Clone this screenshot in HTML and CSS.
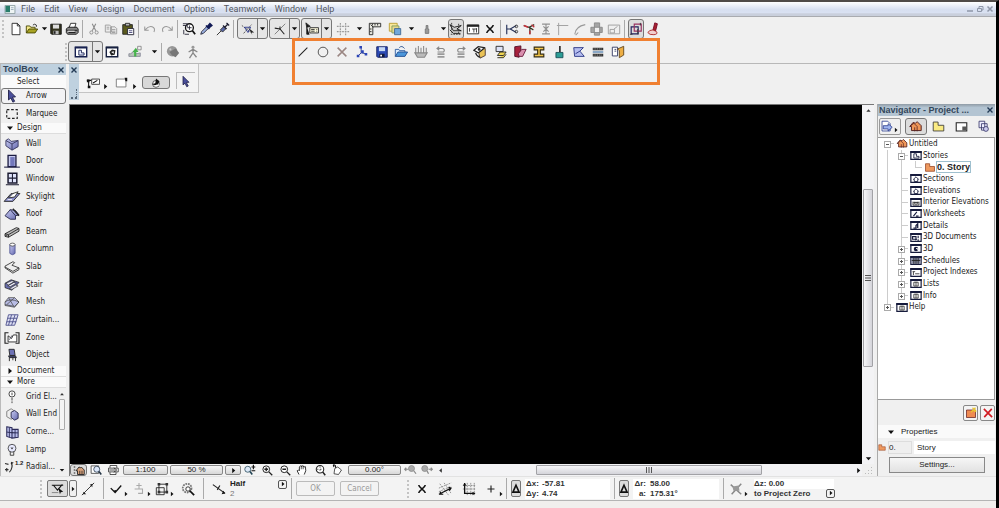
FILE: index.html
```html
<!DOCTYPE html>
<html lang="en">
<head>
<meta charset="utf-8">
<title>Untitled</title>
<link rel="stylesheet" href="styles.css">
</head>
<body>
<svg class="sprite" aria-hidden="true">
<defs>
<linearGradient id="blue" x1="0" y1="0" x2="1" y2="1"><stop offset="0" stop-color="#c9ccf2"/><stop offset="1" stop-color="#6468ae"/></linearGradient>
</defs>
<symbol id="down" viewBox="0 0 8 8"><path d="M1 2.500h6L4 6z" fill="#111"/></symbol>
<symbol id="right" viewBox="0 0 8 8"><path d="M2.500 1v6L6 4z" fill="#111"/></symbol>
<symbol id="up" viewBox="0 0 8 8"><path d="M1.500 5.500h5L4 2.500z" fill="#333"/></symbol>
<symbol id="left" viewBox="0 0 8 8"><path d="M5.500 1.500v5L2.500 4z" fill="#333"/></symbol>
<symbol id="close" viewBox="0 0 8 8"><path d="M1.500 1.500l5 5M6.500 1.500l-5 5" stroke="#233a55" stroke-width="1.400"/></symbol>
<symbol id="new" viewBox="0 0 16 16"><path d="M3.500 1.500h6l3 3v10h-9z" fill="#fff" stroke="#222"/><path d="M9.500 1.500v3h3" fill="none" stroke="#222"/></symbol>
<symbol id="open" viewBox="0 0 16 16"><path d="M1.500 12.500v-8h4l1 1.500h5v2" fill="#f4e88a" stroke="#444300"/><path d="M1.500 12.500l3-4.500h10l-3 4.500z" fill="#a8a324" stroke="#444300"/><path d="M9 3.500q2-2 4 0v2" fill="none" stroke="#222"/></symbol>
<symbol id="save" viewBox="0 0 16 16"><path d="M2 2.500h12v11.500H3l-1-1z" fill="#34341f" stroke="#111"/><path d="M4.500 3h7v4.500h-7z" fill="#dddddd"/><path d="M5 10h6v4H5z" fill="#bbb"/><path d="M5.500 10.500h2v3h-2z" fill="#222"/></symbol>
<symbol id="saveblue" viewBox="0 0 16 16"><path d="M2 2h12v12H3l-1-1z" fill="#2d4bb5" stroke="#101c60"/><path d="M4.500 2.500h7V7h-7z" fill="#c7d9f3"/><path d="M5 10h6v4H5z" fill="#10183c"/><path d="M6 11h2v2H6z" fill="#fff"/></symbol>
<symbol id="print" viewBox="0 0 16 16"><path d="M4.500 7l2-5.500h6l-1.500 5.500" fill="#fff" stroke="#222"/><path d="M1.500 8l2-2h10l1.500 2v4l-2 2h-10l-1.500-2z" fill="#888" stroke="#111"/><path d="M2 9.500h12M4 12h8" stroke="#111"/><path d="M3 10.500h8" stroke="#fff"/></symbol>
<symbol id="cut" viewBox="0 0 16 16"><path d="M6 2l4 8M10 2l-4 8" stroke="#888" stroke-width="1.200"/><circle cx="5" cy="12" r="1.800" fill="none" stroke="#888"/><circle cx="11" cy="12" r="1.800" fill="none" stroke="#888"/></symbol>
<symbol id="copy" viewBox="0 0 16 16"><path d="M1.500 3.500h5l2 2v6h-7zM7.500 5.500h5l2 2v6h-7z" fill="#ececec" stroke="#999"/><path d="M3 6h3M3 8h3M9 8.500h4M9 10.500h4M9 12h4" stroke="#999"/></symbol>
<symbol id="paste" viewBox="0 0 16 16"><path d="M2 3h11v11H2z" fill="#5a5a1e" stroke="#222"/><path d="M5 1.500h5v3H5z" fill="#bbb" stroke="#222"/><path d="M7.500 7.500h7v7h-7z" fill="#fff" stroke="#223"/><path d="M9 10h4M9 12h4" stroke="#447"/></symbol>
<symbol id="undo" viewBox="0 0 16 16"><path d="M2 5v4.500h4.500M2.500 9q4-5 8-3.500t2 6" fill="none" stroke="#999" stroke-width="1.200"/></symbol>
<symbol id="redo" viewBox="0 0 16 16"><path d="M14 5v4.500H9.500M13.500 9q-4-5-8-3.500t-2 6" fill="none" stroke="#999" stroke-width="1.200"/></symbol>
<symbol id="find" viewBox="0 0 16 16"><circle cx="8.500" cy="6.500" r="4.500" fill="#fff" stroke="#111" stroke-width="1.500"/><path d="M12 10l3 4" stroke="#111" stroke-width="2"/><path d="M1 2h5v4M1 4h4M8.500 4v5M6 6.500h5M2 9v5M3 14h5" stroke="#223" fill="none"/></symbol>
<symbol id="dropper" viewBox="0 0 16 16"><path d="M2 14l1-3 6-6 2 2-6 6z" fill="#9ab0e0" stroke="#223"/><path d="M8 4l4 4M10 5l2.500-3 2 2-3 2.500z" stroke="#111a55" stroke-width="2" fill="#111a55"/></symbol>
<symbol id="syringe" viewBox="0 0 16 16"><path d="M1 15l5-5" stroke="#222"/><path d="M5 9l4-4 2.500 2.500-4 4z" fill="#5968a8" stroke="#222"/><path d="M8 4l4 4M10 6l4-4M12 1l3 3" stroke="#223" stroke-width="1.500"/></symbol>
<symbol id="guide" viewBox="0 0 16 16"><path d="M1 4l12 9M3 13l9-10" stroke="#444" stroke-dasharray="2 1"/><path d="M4 6h7l-3 6z" fill="none" stroke="#27348b"/><path d="M9 7l6 5-3 0 1 3z" fill="#222"/></symbol>
<symbol id="snap" viewBox="0 0 16 16"><path d="M2 14L14 2" stroke="#777"/><path d="M2 7l6 1 5 6M8 8v-3" stroke="#222" stroke-width="1.200" fill="none"/></symbol>
<symbol id="tracker" viewBox="0 0 16 16"><path d="M5.500 6.500h10v6h-10z" fill="#fffce0" stroke="#222"/><path d="M7 8.500h4M7 10.500h4M13 8.500h1M13 10.500h1" stroke="#222"/><path d="M1 1l5 4-4 1zM2 5v9h3" fill="#141414" stroke="#222"/></symbol>
<symbol id="grid" viewBox="0 0 16 16"><path d="M5 1v14M11 1v14M1 5h14M1 11h14" stroke="#999" stroke-width="1.300" stroke-dasharray="2 1"/></symbol>
<symbol id="ruler" viewBox="0 0 16 16"><path d="M1.500 1.500h13v4h-9v9h-4z" fill="#e8e8e0" stroke="#222"/><path d="M5 2v2M8 2v2M11 2v2M2 8h2M2 11h2M3 3l3 3" stroke="#222"/></symbol>
<symbol id="layers" viewBox="0 0 16 16"><path d="M1.500 1.500h9v9h-9z" fill="#f9e89a" stroke="#b89c2e"/><path d="M4.500 4.500h8v8h-8z" fill="#e8d98c" stroke="#7a9a5e"/><path d="M7.500 7.500h7v7h-7z" fill="#70a8dc" stroke="#3e6690"/></symbol>
<symbol id="lock" viewBox="0 0 16 16"><path d="M6 13V8h1V4h2v4h1v5z" fill="#999" stroke="#777"/></symbol>
<symbol id="plane" viewBox="0 0 16 16"><path d="M1 3l5 3 8-2-5 4 5 2H5zM1 9l4 4h8" fill="#ccc" stroke="#111"/><path d="M2 14h12M3 1v12M11 2v12" stroke="#333" stroke-dasharray="2 1"/></symbol>
<symbol id="window" viewBox="0 0 16 16"><path d="M1.500 3.500h13v10h-13z" fill="#fff" stroke="#222"/><path d="M1 3h14v2.500H1z" fill="#222"/><path d="M4 7v4M7 8h5M9 8v4M12 7v5" stroke="#333"/></symbol>
<symbol id="xbold" viewBox="0 0 16 16"><path d="M4.500 4.500l7 7M11.500 4.500l-7 7" stroke="#111" stroke-width="1.800"/><path d="M3.500 4h2M10.500 4h2M3.500 12h2M10.500 12h2" stroke="#111" fill="none"/></symbol>
<symbol id="split" viewBox="0 0 16 16"><path d="M2 3v11M2 8h4l7-4M6 8l7 4" fill="none" stroke="#243059" stroke-width="1.300"/><circle cx="13" cy="5" r="1.500" fill="none" stroke="#333"/><circle cx="13" cy="11" r="1.500" fill="none" stroke="#333"/></symbol>
<symbol id="adjust" viewBox="0 0 16 16"><path d="M2 4l6 2 6-3M8 6l5 3M9 7v7" stroke="#332" fill="none" stroke-width="1.400"/><path d="M2 4l5 2M11 3l3 3M9 10v4" stroke="#c4303a" stroke-width="1.600"/></symbol>
<symbol id="ibeamgray" viewBox="0 0 16 16"><path d="M3.500 2.500h9M3.500 13.500h9M8 3v10M5 5l3 3 3-3M5 11l3-3 3 3" fill="none" stroke="#909090" stroke-width="1.300"/></symbol>
<symbol id="corner" viewBox="0 0 16 16"><path d="M3 15V4h11M3 1v3M1 4h2" fill="none" stroke="#999"/></symbol>
<symbol id="fillet" viewBox="0 0 16 16"><path d="M2 14q1-9 12-11M3 15l3-3" fill="none" stroke="#999" stroke-width="1.200"/></symbol>
<symbol id="trim" viewBox="0 0 16 16"><path d="M5 1v14h6V1zM1 6h13v6H1z" fill="#a5a5a5" stroke="#888"/></symbol>
<symbol id="resize" viewBox="0 0 16 16"><path d="M1.500 3.500h13v10h-13zM3.500 8.500h5v4h-5zM8 8l4-3" fill="none" stroke="#999"/></symbol>
<symbol id="group" viewBox="0 0 16 16"><path d="M2.500 5.500h8v8h-8z" fill="none" stroke="#20205a" stroke-width="1.300"/><path d="M6 2.500h8v8H6z" fill="none" stroke="#983060" stroke-width="1.300"/><path d="M1 14h3M13 1v3M10 8v6" stroke="#333"/></symbol>
<symbol id="redpen" viewBox="0 0 16 16"><path d="M8 9l2-8 3 1-2 8z" fill="#a62330" stroke="#702"/><path d="M2 12q2-3 6-3l4 2q2 3-3 3.500t-7-2.500z" fill="#f1d0d0" stroke="#a22"/></symbol>
<symbol id="plan" viewBox="0 0 16 16"><path d="M1.500 2.500h13v11h-13z" fill="#fff" stroke="#17204f" stroke-width="1.600"/><path d="M1 2h14v2H1z" fill="#17204f"/><path d="M5.500 6v5.500h6V9h-3V6z" fill="#e6eaff" stroke="#17204f"/></symbol>
<symbol id="w3d" viewBox="0 0 16 16"><path d="M1.500 2.500h13v11h-13z" fill="#fff" stroke="#17203f" stroke-width="1.600"/><path d="M1 2h14v2H1z" fill="#17203f"/><path d="M5 8l3-3 4 1-1 5-4 1z" fill="#222"/><path d="M7 8l3-1v3z" fill="#fff"/></symbol>
<symbol id="section" viewBox="0 0 16 16"><path d="M1 13h13V9l-4 1-3-3-4 3H1z" fill="#b8c5b8" stroke="#889"/><path d="M7 13V8H5l4-5 3 5H9.500v5z" fill="#45b34a"/><path d="M11 1.500h4v4h-4z" fill="none" stroke="#888"/></symbol>
<symbol id="render" viewBox="0 0 16 16"><circle cx="7" cy="7" r="6" fill="#979797"/><path d="M4 8l7-4 4 5-4 5-4-2z" fill="#777"/><circle cx="5" cy="5" r="1.200" fill="#ccc"/></symbol>
<symbol id="walk" viewBox="0 0 16 16"><circle cx="8" cy="2.500" r="1.700" fill="#999"/><path d="M8 4v5l-4 6M8 9l4 5M3 8l5-3 5 3" fill="none" stroke="#888" stroke-width="1.500"/></symbol>
<symbol id="line" viewBox="0 0 16 16"><path d="M3 13L13 3" stroke="#222" stroke-width="1.300"/></symbol>
<symbol id="circle" viewBox="0 0 16 16"><circle cx="8" cy="8" r="5.500" fill="none" stroke="#444"/></symbol>
<symbol id="xgray" viewBox="0 0 16 16"><path d="M3 3l10 10M13 3L3 13" stroke="#9a8682" stroke-width="1.700"/></symbol>
<symbol id="nodes" viewBox="0 0 16 16"><path d="M7 3v6l6 1M7 9l-4 4" stroke="#24368c" fill="none"/><path d="M5 1h3v3H5zM7 6h3v3H7zM11 9h3v3h-3zM2 11h3v3H2z" fill="#2b45b6"/></symbol>
<symbol id="openblue" viewBox="0 0 16 16"><path d="M1.500 13V5h4l1 1.500h6V8" fill="#d9ecff" stroke="#25569b"/><path d="M1.500 13l3-5h11l-3 5z" fill="#4b96da" stroke="#204a8c"/><path d="M6 3q3-3 6 1" fill="none" stroke="#204a8c"/></symbol>
<symbol id="basket" viewBox="0 0 16 16"><path d="M2 3v6M5 1v8M8 3v6M11 1v8M14 3v6M1 9h14l-3 5H4z" fill="#bbb" stroke="#888" stroke-width="1.200"/></symbol>
<symbol id="rotl" viewBox="0 0 16 16"><path d="M4 4h6q3 1 1 4H4M6 2L3.500 4 6 6" fill="none" stroke="#888" stroke-width="1.300"/><path d="M4 10.500h8M4 13.500h8" stroke="#999" stroke-width="2"/></symbol>
<symbol id="rotr" viewBox="0 0 16 16"><path d="M12 4H6Q3 5 5 8h7M10 2l2.500 2L10 6" fill="none" stroke="#888" stroke-width="1.300"/><path d="M4 10.500h8M4 13.500h8" stroke="#999" stroke-width="2"/></symbol>
<symbol id="eyebox" viewBox="0 0 16 16"><path d="M6 6l8-2v8l-6 3z" fill="#eac255" stroke="#433"/><path d="M1 6l5-4 7 1-3 3-4 3z" fill="#fff" stroke="#222" stroke-width="1.400"/><circle cx="7" cy="5" r="1.600" fill="#222"/><path d="M3 9q1 4 5 5" stroke="#222" fill="none" stroke-width="1.300"/></symbol>
<symbol id="stack" viewBox="0 0 16 16"><path d="M3.500 1.500h8v6h-8z" fill="#dde2f6" stroke="#222"/><path d="M5 12l3-4h7l-3 4zM5 14.500h7l3-4" fill="#efd552" stroke="#222"/></symbol>
<symbol id="redbook" viewBox="0 0 16 16"><path d="M2 2l7-1v4l-2 9-5-1z" fill="#a7213c" stroke="#4a0d24"/><path d="M6 10l4-5h5l-4 8H7z" fill="#d98fae" stroke="#641535"/></symbol>
<symbol id="ibeam" viewBox="0 0 16 16"><path d="M2.500 2.500h11v3h-4v5h4v3h-11v-3h4v-5h-4z" fill="#f3c548" stroke="#332b10" stroke-width="1.300"/></symbol>
<symbol id="brush" viewBox="0 0 16 16"><path d="M8 1h2v7H8z" fill="#333"/><path d="M4.500 8.500h8v6h-8z" fill="#2b9d95" stroke="#174b55"/></symbol>
<symbol id="fold" viewBox="0 0 16 16"><path d="M2 3h11L9 7l5 6H3z" fill="#b5bdf0" stroke="#242f80"/><path d="M4 10l5-3" stroke="#242f80"/></symbol>
<symbol id="hatch" viewBox="0 0 16 16"><path d="M2 3h12v3H2zM2 10h12v3H2z" fill="#333"/><path d="M2 7h12v2H2z" fill="#7d9ec0"/><path d="M3 4.500h10M3 11.500h10" stroke="#aaa" stroke-dasharray="1 1"/></symbol>
<symbol id="doors" viewBox="0 0 16 16"><path d="M1.500 2.500h6v10h-6z" fill="#fff" stroke="#2b335e"/><path d="M7.500 4.500l7-3v10l-5 3v-8z" fill="#edae44" stroke="#5e431c"/><path d="M4 5h2M4 7h2" stroke="#2b335e"/></symbol>
<symbol id="arrow" viewBox="0 0 16 16"><path d="M4 1l8 8-3.500.300L11 14l-2 1-2.300-4.700L4 12.500z" fill="#4a4f9c" stroke="#1c1c44"/></symbol>
<symbol id="method" viewBox="0 0 16 16"><path d="M6.500 3.500h9v6h-9z" fill="#fff" stroke="#333"/><path d="M1 5h5M3 5v8M8 8l5-3" stroke="#111" stroke-width="1.200" fill="none"/><path d="M1 4h3v3H1zM2 11h3v3H2z" fill="#111"/></symbol>
<symbol id="rect" viewBox="0 0 16 16"><path d="M1.500 3.500h11v9h-11z" fill="#fff" stroke="#777"/><path d="M11 2h3v4h-2z" fill="#111"/></symbol>
<symbol id="magic" viewBox="0 0 16 16"><circle cx="8" cy="10" r="5" fill="#fff" stroke="#222"/><path d="M2 10l5-1 1-7 5 4-2 5-5 1z" fill="#111"/><path d="M8 12h5" stroke="#fff"/></symbol>
<symbol id="marquee" viewBox="0 0 20 16"><path d="M4 3h12v10H4z" fill="none" stroke="#222" stroke-width="1.300" stroke-dasharray="3 2"/></symbol>
<symbol id="wall" viewBox="0 0 20 16"><path d="M3 4l3-2 3 3 8-1v7l-7 4-7-5z" fill="url(#blue)" stroke="#35355c"/><path d="M3 4l7 4 7-4M10 8v7" fill="none" stroke="#35355c"/></symbol>
<symbol id="door" viewBox="0 0 20 16"><path d="M5.500 1.500h9v13h-9z" fill="#c7caee" stroke="#1a1a40" stroke-width="1.500"/><path d="M8 3.500h5V14H8z" fill="#7378bb"/><path d="M1 15h18" stroke="#1a1a40" stroke-width="1.200"/></symbol>
<symbol id="win" viewBox="0 0 20 16"><path d="M5.500 1.500h10v11h-10z" fill="#dfe3fa" stroke="#1a1a30" stroke-width="1.700"/><path d="M10.500 2v10M6 7h9M3 14.500h15" stroke="#1a1a30" stroke-width="1.200"/></symbol>
<symbol id="skylight" viewBox="0 0 20 16"><path d="M1 13l8-9h10l-8 9z" fill="#8a8ecb" stroke="#222"/><path d="M6 9l5-5 6-2-4 6z" fill="#fff" stroke="#222"/><path d="M5 11h5" stroke="#fff"/></symbol>
<symbol id="roof" viewBox="0 0 20 16"><path d="M2 10l6-7 6 1 4 5-4 1v4H8z" fill="url(#blue)" stroke="#25254a"/><path d="M8 3l6 7" stroke="#25254a"/><path d="M11 2l7 8" stroke="#222" stroke-width="1.500"/></symbol>
<symbol id="beam" viewBox="0 0 20 16"><path d="M2 10L15 3l3 1v3L6 14l-4-1z" fill="#bbb" stroke="#222"/><path d="M2 10l4 1 12-7M6 11v3" fill="none" stroke="#222"/><path d="M2 11l3 1v1l-3-1z" fill="#444"/></symbol>
<symbol id="column" viewBox="0 0 20 16"><path d="M7.500 3v10q3 3 6 0V3z" fill="url(#blue)" stroke="#555a98"/><ellipse cx="10.500" cy="3" rx="3" ry="1.700" fill="#fff" stroke="#555"/></symbol>
<symbol id="slab" viewBox="0 0 20 16"><path d="M2 7l9-5 2 1-3 3 8 3v2l-7 4-9-6z" fill="#eee" stroke="#333"/><path d="M2 8l9 5 7-4" fill="none" stroke="#333"/></symbol>
<symbol id="stair" viewBox="0 0 20 16"><path d="M2 6l7-4 9 3-8 9-8-3z" fill="#6a6fb0" stroke="#222" stroke-width=".800"/><path d="M3 6l7-3 3 1-7 4zM5 9l7-4 3 1-7 4zM7 12l7-4 3 1-7 4z" fill="#e8e8f6" stroke="#222" stroke-width=".700"/></symbol>
<symbol id="mesh" viewBox="0 0 20 16"><path d="M2 8l4-5h7l5 5-5 6-11-2z" fill="#b8bce4" stroke="#444" stroke-width=".800"/><path d="M6 3l6 10M2 8q6-5 16 0M4 11l9-8M2 11l11 2 5-5" fill="none" stroke="#444" stroke-width=".800"/></symbol>
<symbol id="curtain" viewBox="0 0 20 16"><path d="M6 2h11l-4 12H3zM9.500 2L6 14M13.500 2l-4 12M5 6h11M4 10h11" fill="#dee0f4" stroke="#4c4f8c"/></symbol>
<symbol id="zone" viewBox="0 0 20 16"><path d="M6 2H2v12h4M14 2h4v12h-4" fill="none" stroke="#222" stroke-width="1.300"/><path d="M5.500 5.500l4 3 2-4h4v8h-10z" fill="#fff" stroke="#222"/><path d="M7 10l3-5" stroke="#556"/></symbol>
<symbol id="object" viewBox="0 0 20 16"><path d="M6.500 1.500h6l1 7h-6z" fill="#6d72b5" stroke="#222"/><path d="M6 9h8l1 2H7zM7 11v4M14 11v4M11 11v3" fill="#444a80" stroke="#222"/></symbol>
<symbol id="gridel" viewBox="0 0 20 16"><circle cx="10" cy="4.500" r="3.500" fill="#fff" stroke="#333"/><path d="M10 3v3M10 9v6" stroke="#333" stroke-dasharray="3 1"/></symbol>
<symbol id="wallend" viewBox="0 0 20 16"><path d="M4 5l5-3 3 2v8l-3 2-5-3z" fill="#eee" stroke="#777"/><path d="M9 6l4-2 4 3v6l-4 2-4-3z" fill="url(#blue)" stroke="#222248"/></symbol>
<symbol id="cornerwin" viewBox="0 0 20 16"><path d="M4 2l6 1v12l-6-2zM10 5h7v9l-7 1z" fill="#b7bbe8" stroke="#2c2c5a" stroke-width="1.200"/><path d="M7 3v11M4 8l6 1h7M13.500 5v9" stroke="#2c2c5a"/></symbol>
<symbol id="lamp" viewBox="0 0 20 16"><circle cx="10" cy="6" r="4.500" fill="#e8eaff" stroke="#444"/><path d="M8 10v4h4v-4M9 5l1 2 1-2" fill="none" stroke="#333"/></symbol>
<symbol id="radial" viewBox="0 0 20 16"><path d="M2 4l4 1M9 3q3 5-2 11M2 11h4M4 9v4" fill="none" stroke="#333" stroke-width="1.300"/><path d="M9 2l3 1-3 2z" fill="#222"/></symbol>
<symbol id="home" viewBox="0 0 16 16"><path d="M1 8l4-5 3 1 2-2 5 5v6H3V8z" fill="#ef9657" stroke="#522" stroke-width="1.200"/><path d="M1 8l5-4 4 4M7 9v5M10 8v6" stroke="#522" fill="none"/></symbol>
<symbol id="quick" viewBox="0 0 16 16"><path d="M1 4h2M1 8h2M1 12h2" stroke="#222" stroke-width="1.500"/><path d="M4 9l4-5 2 1 1-1 4 4v6H6V9z" fill="#d8a27c" stroke="#222" stroke-width="1.200"/><path d="M9 9v5M12 9v5" stroke="#222"/></symbol>
<symbol id="story" viewBox="0 0 16 16"><path d="M1.500 2.500h6v4h7v7h-13z" fill="#ee9a60" stroke="#8c3512"/></symbol>
<symbol id="views" viewBox="0 0 16 16"><path d="M1.500 2.500h6v4h7v7h-13z" fill="#faeb83" stroke="#333"/></symbol>
<symbol id="layout" viewBox="0 0 16 16"><path d="M1.500 3.500h13v10h-13z" fill="#fff" stroke="#222" stroke-width="1.300"/><path d="M9 8h5v5H9z" fill="#555"/></symbol>
<symbol id="publish" viewBox="0 0 16 16"><path d="M2.500 1.500h7v8h-7zM5.500 4.500h7v8h-7z" fill="#eef" stroke="#336"/><circle cx="11" cy="11" r="3" fill="#cce" stroke="#336"/></symbol>
<symbol id="export" viewBox="0 0 16 16"><path d="M2.500 1.500h7l3 3v9h-10z" fill="#fff" stroke="#2a3c8e"/><path d="M4 7h6V4.500l5 4.500-5 4.500V11H4z" fill="#9fb4ee" stroke="#2a3c8e"/></symbol>
<symbol id="frame" viewBox="0 0 14 12"><path d="M1 1.500h12v9H1z" fill="#fff" stroke="#161b3c" stroke-width="1.400"/><path d="M.300 1h13.400v2H.300z" fill="#161b3c"/></symbol>
<symbol id="fsection" viewBox="0 0 14 12"><use href="#frame"/><path d="M4 7l3-3 3 3H9v2.500H5V7z" fill="none" stroke="#161b3c"/></symbol>
<symbol id="fplan" viewBox="0 0 14 12"><use href="#frame"/><path d="M4.500 4v5h6V7h-3V4z" fill="#fff" stroke="#161b3c"/></symbol>
<symbol id="finterior" viewBox="0 0 14 12"><use href="#frame"/><path d="M3.500 5v4h7V5M5 5v3M7 5v4M9 5v3M4 6h6" fill="none" stroke="#333"/></symbol>
<symbol id="fwork" viewBox="0 0 14 12"><use href="#frame"/><path d="M4 9l4-5M7 9h3" stroke="#161b3c" stroke-width="1.300"/></symbol>
<symbol id="fdetail" viewBox="0 0 14 12"><use href="#frame"/><path d="M4 9h3V6l2-2v5" fill="none" stroke="#161b3c" stroke-width="1.500"/></symbol>
<symbol id="f3ddoc" viewBox="0 0 14 12"><use href="#frame"/><path d="M3 5h4v3H3zM9.500 4v3M9.500 8v2M6 9l2-1" fill="none" stroke="#161b3c" stroke-width="1.300"/></symbol>
<symbol id="f3d" viewBox="0 0 14 12"><use href="#frame"/><circle cx="7" cy="6.700" r="2.600" fill="#161b3c"/><path d="M7 6h2v2" stroke="#fff" fill="none"/></symbol>
<symbol id="fsched" viewBox="0 0 14 12"><use href="#frame"/><path d="M2 3h10v7H2z" fill="#8a8fa8"/><path d="M4.500 3v7M7 3v7M9.500 3v7M2 6h10" stroke="#222"/></symbol>
<symbol id="findex" viewBox="0 0 14 12"><use href="#frame"/><path d="M3 5h3M4 5v4M6 7.500h5" stroke="#333"/></symbol>
<symbol id="flist" viewBox="0 0 14 12"><use href="#frame"/><path d="M4.500 4.500h5v4.500h-5zM7 4v5" fill="none" stroke="#333"/></symbol>
<symbol id="newview" viewBox="0 0 16 16"><path d="M2 4h12v10H2z" fill="#ef8b52" stroke="#622"/><path d="M8 7l6-6M10 1l5 5M13 1v6" stroke="#e9c52f" stroke-width="1.600"/></symbol>
<symbol id="xred" viewBox="0 0 16 16"><path d="M2.500 2.500l11 11M13 2.500L3 13.500" stroke="#d21b22" stroke-width="2.200"/></symbol>
<symbol id="zoomsel" viewBox="0 0 16 16"><path d="M1.500 2.500h10v10h-10z" fill="#fff" stroke="#333"/><circle cx="9" cy="7" r="4" fill="#dbe7fb" stroke="#234"/><path d="M12 10l3 4" stroke="#234" stroke-width="2"/></symbol>
<symbol id="plot" viewBox="0 0 16 16"><path d="M4 5V2h9v3M2 5.500h13v5H2zM4 11v3h8v-3" fill="#fff" stroke="#222"/><path d="M3 8h8M9 5l4 3-4 3" stroke="#111" fill="none"/></symbol>
<symbol id="zoompm" viewBox="0 0 16 16"><circle cx="5" cy="7" r="4" fill="#dce9f8" stroke="#245"/><path d="M8 10l3 4" stroke="#245" stroke-width="2"/><path d="M12.500 1v6M10 4h5M10 9h5" stroke="#111" stroke-width="1.500"/></symbol>
<symbol id="zin" viewBox="0 0 16 16"><circle cx="7" cy="7" r="4.500" fill="#fff" stroke="#222" stroke-width="1.300"/><path d="M10.500 10.500L15 15M7 4.500v5M4.500 7h5" stroke="#222" stroke-width="1.800"/></symbol>
<symbol id="zout" viewBox="0 0 16 16"><circle cx="7" cy="7" r="4.500" fill="#fff" stroke="#222" stroke-width="1.300"/><path d="M10.500 10.500L15 15M4.500 7h5" stroke="#222" stroke-width="1.800"/></symbol>
<symbol id="hand" viewBox="0 0 16 16"><path d="M4 14L1.500 9l2-1 1 1V4l2-2 1 2 1.500-2 1.500 2 2-.500L13 9l-2 5" fill="#fff" stroke="#222" stroke-width="1.200"/><path d="M7 4v3M9.500 4v3" stroke="#222"/></symbol>
<symbol id="fit" viewBox="0 0 16 16"><circle cx="8" cy="7" r="5" fill="#fff" stroke="#222" stroke-width="1.400"/><path d="M11.500 10.500L15 15" stroke="#222" stroke-width="2"/><path d="M8 3v8M4 7h8" stroke="#222" stroke-dasharray="2 2"/></symbol>
<symbol id="orient" viewBox="0 0 16 16"><path d="M5 6l4-2 5 4-4 6-6-1z" fill="#fff" stroke="#222"/><path d="M3 1q4 0 3 4M3 1l1 3" fill="none" stroke="#111" stroke-width="1.400"/></symbol>
<symbol id="zprev" viewBox="0 0 16 16"><circle cx="10" cy="6" r="4" fill="#aaa" stroke="#888"/><path d="M13 9l3 4M1 7h5M3 5L1 7l2 2" stroke="#888" stroke-width="1.600" fill="none"/></symbol>
<symbol id="znext" viewBox="0 0 16 16"><circle cx="5" cy="6" r="4" fill="#aaa" stroke="#888"/><path d="M8 9l2 4M10 7h5M13 5l2 2-2 2" stroke="#888" stroke-width="1.600" fill="none"/></symbol>
<symbol id="origin" viewBox="0 0 16 16"><path d="M1 4h14M3 4l5 6 6-7" fill="none" stroke="#111" stroke-width="1.300"/><path d="M1 13h8" stroke="#777"/><path d="M9 7l6 5-3 .500-1 2.500z" fill="#111"/></symbol>
<symbol id="seg" viewBox="0 0 16 16"><path d="M1 15L15 1" stroke="#222"/><path d="M3 11l3 3-4 0zM10 3l3 3 0-4z" fill="#222"/></symbol>
<symbol id="check" viewBox="0 0 16 16"><path d="M2 7l5 5 7-8M7 12V9" fill="none" stroke="#111" stroke-width="1.500"/></symbol>
<symbol id="plusdim" viewBox="0 0 16 16"><path d="M8 1v7M5 4h6M3 8h9v5H7" fill="none" stroke="#aaa" stroke-width="1.200"/></symbol>
<symbol id="boxes" viewBox="0 0 16 16"><path d="M4.500 2.500h9v9h-9zM1.500 6.500h9v8h-9z" fill="none" stroke="#222"/><path d="M3 1h3v3H3zM12 1h3v3h-3zM12 10h3v3h-3zM3 10h3v3H3z" fill="#333"/></symbol>
<symbol id="gear" viewBox="0 0 16 16"><circle cx="7" cy="7" r="5" fill="none" stroke="#777" stroke-width="2" stroke-dasharray="2 1"/><circle cx="8" cy="8" r="2.500" fill="#fff" stroke="#222"/><path d="M10 10l5 5" stroke="#111" stroke-width="2"/></symbol>
<symbol id="half" viewBox="0 0 16 16"><path d="M1 3l14 10M9 4l-3 5" stroke="#222" stroke-width="1.300"/><path d="M11 14l4-1-2-3z" fill="#111"/></symbol>
<symbol id="skew" viewBox="0 0 16 16"><path d="M1 7l14-6M1 11l14-6M2 2l10 13M7 1l8 12" stroke="#888" stroke-dasharray="2 1"/><path d="M1 14l14-7M3 11l-1 3 4 0M12 6l3 1-2 3" stroke="#111" stroke-width="1.300" fill="none"/></symbol>
<symbol id="gridsnap" viewBox="0 0 16 16"><path d="M1 4h14M1 8h14M6 1v14M10 1v14M14 1v14" stroke="#888" stroke-dasharray="2 1"/><path d="M3 1v12h12" stroke="#111" stroke-width="1.500" fill="none"/><path d="M1 4l2-3 2 3zM12 11l3 2-3 2z" fill="#111"/></symbol>
<symbol id="plus" viewBox="0 0 16 16"><path d="M8 4v8M4 8h8" stroke="#222" stroke-width="1.300"/></symbol>
<symbol id="gravity" viewBox="0 0 16 16"><path d="M2 3l12 11M14 2L3 14" stroke="#888" stroke-width="1.700"/><path d="M4 5l7-1 1 6H5z" fill="#999"/></symbol>
<symbol id="delta" viewBox="0 0 16 16"><path d="M8 2l5 11H3z" fill="none" stroke="#111" stroke-width="2.600"/></symbol>
<symbol id="grip3" viewBox="0 0 8 8"><path d="M1.500 1v6M4 1v6M6.500 1v6" stroke="#555"/></symbol>
</svg>

<div class="app">
<header class="menubar">
  <svg class="doc" viewBox="0 0 12 10"><path d="M.500.500h11v9H.500z" fill="#eef4f4" stroke="#8b9da0"/><path d="M1 1h5v7H1z" fill="#287c6c"/><path d="M7 3h3M7 5h3" stroke="#9ab"/></svg>
  <nav><button>File</button><button>Edit</button><button>View</button><button>Design</button><button>Document</button><button>Options</button><button>Teamwork</button><button>Window</button><button>Help</button></nav>
  <div class="winbtns">
    <button aria-label="Minimize"><svg viewBox="0 0 8 8"><path d="M1 6h6" stroke="#8f97a8" stroke-width="1.500"/></svg></button>
    <button aria-label="Restore"><svg viewBox="0 0 8 8"><path d="M1.500 3.500h4v3h-4zM3 3V1.500h4V5H6" fill="none" stroke="#8f97a8"/></svg></button>
    <button aria-label="Close document"><svg viewBox="0 0 8 8"><path d="M1.500 1.500l5 5M6.500 1.500l-5 5" stroke="#8f97a8" stroke-width="1.500"/></svg></button>
  </div>
</header>

<section class="toolbars">
<div class="bar">
  <i class="grip"></i>
  <button class="t" aria-label="New"><svg><use href="#new"/></svg></button><button class="t" aria-label="Open"><svg><use href="#open"/></svg></button><button class="d" aria-label="Recent files"><svg><use href="#down"/></svg></button><button class="t" aria-label="Save"><svg><use href="#save"/></svg></button><button class="t" aria-label="Print"><svg><use href="#print"/></svg></button>
  <i class="sep"></i>
  <div class="g"><button class="t" aria-label="Cut"><svg><use href="#cut"/></svg></button><button class="t" aria-label="Copy"><svg><use href="#copy"/></svg></button><button class="t" aria-label="Paste"><svg><use href="#paste"/></svg></button></div>
  <i class="sep"></i>
  <div class="g"><button class="t" aria-label="Undo"><svg><use href="#undo"/></svg></button><button class="t" aria-label="Redo"><svg><use href="#redo"/></svg></button></div>
  <i class="sep"></i>
  <div class="g"><button class="t" aria-label="Find and select"><svg><use href="#find"/></svg></button><button class="t" aria-label="Pick up parameters"><svg><use href="#dropper"/></svg></button><button class="t" aria-label="Inject parameters"><svg><use href="#syringe"/></svg></button></div>
  <i class="sep"></i>
  <div class="g">
    <div class="split"><button aria-label="Guide lines"><svg><use href="#guide"/></svg></button><button class="m" aria-label="Guide line options"><svg><use href="#down"/></svg></button></div>
    <div class="split"><button aria-label="Snap"><svg><use href="#snap"/></svg></button><button class="m" aria-label="Snap options"><svg><use href="#down"/></svg></button></div>
    <div class="split"><button aria-label="Tracker"><svg><use href="#tracker"/></svg></button><button class="m" aria-label="Tracker options"><svg><use href="#down"/></svg></button></div>
  </div>
  <div class="g view">
    <button class="t" aria-label="Grid"><svg><use href="#grid"/></svg></button><button class="d" aria-label="Grid options"><svg><use href="#down"/></svg></button><button class="t" aria-label="Rulers"><svg><use href="#ruler"/></svg></button><button class="t" aria-label="Layers"><svg><use href="#layers"/></svg></button><button class="d" aria-label="Layer options"><svg><use href="#down"/></svg></button><button class="t" aria-label="Lock"><svg><use href="#lock"/></svg></button><button class="d" aria-label="Lock options"><svg><use href="#down"/></svg></button>
  </div>
  <div class="g"><button class="t on" aria-label="Editing plane"><svg><use href="#plane"/></svg></button><button class="t" aria-label="Floating window"><svg><use href="#window"/></svg></button><button class="t" aria-label="Markers"><svg><use href="#xbold"/></svg></button></div>
  <i class="sep"></i>
  <div class="g"><button class="t" aria-label="Split"><svg><use href="#split"/></svg></button><button class="t" aria-label="Adjust"><svg><use href="#adjust"/></svg></button><button class="t" aria-label="Stretch"><svg><use href="#ibeamgray"/></svg></button><button class="t" aria-label="Intersect"><svg><use href="#corner"/></svg></button><button class="t" aria-label="Fillet"><svg><use href="#fillet"/></svg></button><button class="t" aria-label="Trim"><svg><use href="#trim"/></svg></button><button class="t" aria-label="Resize"><svg><use href="#resize"/></svg></button></div>
  <i class="sep"></i>
  <div class="g"><button class="t on" aria-label="Suspend groups"><svg><use href="#group"/></svg></button><button class="t" aria-label="Markup"><svg><use href="#redpen"/></svg></button></div>
</div>
<div class="bar second">
  <i class="grip"></i>
  <div class="split wide"><button aria-label="Floor plan"><svg><use href="#plan"/></svg></button><button class="m" aria-label="Floor plan options"><svg><use href="#down"/></svg></button></div>
  <div class="g modes"><button class="t" aria-label="3D window"><svg><use href="#w3d"/></svg></button><button class="t" aria-label="Section view"><svg><use href="#section"/></svg></button><button class="d" aria-label="Section options"><svg><use href="#down"/></svg></button></div>
  <i class="sep"></i>
  <div class="g walkers"><button class="t" aria-label="Render"><svg><use href="#render"/></svg></button><button class="t" aria-label="Walk"><svg><use href="#walk"/></svg></button></div>
  <div class="g extras">
    <button class="t" aria-label="Line"><svg><use href="#line"/></svg></button><button class="t" aria-label="Circle"><svg><use href="#circle"/></svg></button><button class="t" aria-label="Delete"><svg><use href="#xgray"/></svg></button><button class="t" aria-label="Nodes"><svg><use href="#nodes"/></svg></button><button class="t" aria-label="Save profile"><svg><use href="#saveblue"/></svg></button><button class="t" aria-label="Open profile"><svg><use href="#openblue"/></svg></button><button class="t" aria-label="Basket"><svg><use href="#basket"/></svg></button><button class="t" aria-label="Send back"><svg><use href="#rotl"/></svg></button><button class="t" aria-label="Bring forward"><svg><use href="#rotr"/></svg></button><button class="t" aria-label="Inspect"><svg><use href="#eyebox"/></svg></button><button class="t" aria-label="Stack"><svg><use href="#stack"/></svg></button><button class="t" aria-label="Catalog"><svg><use href="#redbook"/></svg></button><button class="t" aria-label="Profile"><svg><use href="#ibeam"/></svg></button><button class="t" aria-label="Surface"><svg><use href="#brush"/></svg></button><button class="t" aria-label="Fold"><svg><use href="#fold"/></svg></button><button class="t" aria-label="Composite"><svg><use href="#hatch"/></svg></button><button class="t" aria-label="Openings"><svg><use href="#doors"/></svg></button>
  </div>
</div>
<div class="highlight"></div>
</section>

<main class="body">
<aside class="toolbox">
  <div class="title"><h2>ToolBox</h2><button aria-label="Close toolbox"><svg><use href="#close"/></svg></button></div>
  <div class="head plain">Select</div>
  <div class="tools select"><button class="active"><svg><use href="#arrow"/></svg>Arrow</button><button><svg><use href="#marquee"/></svg>Marquee</button></div>
  <button class="head"><svg><use href="#down"/></svg>Design</button>
  <div class="tools design">
    <button><svg><use href="#wall"/></svg>Wall</button><button><svg><use href="#door"/></svg>Door</button><button><svg><use href="#win"/></svg>Window</button><button><svg><use href="#skylight"/></svg>Skylight</button><button><svg><use href="#roof"/></svg>Roof</button><button><svg><use href="#beam"/></svg>Beam</button><button><svg><use href="#column"/></svg>Column</button><button><svg><use href="#slab"/></svg>Slab</button><button><svg><use href="#stair"/></svg>Stair</button><button><svg><use href="#mesh"/></svg>Mesh</button><button><svg><use href="#curtain"/></svg>Curtain...</button><button><svg><use href="#zone"/></svg>Zone</button><button><svg><use href="#object"/></svg>Object</button>
  </div>
  <button class="head"><svg><use href="#right"/></svg>Document</button>
  <button class="head"><svg><use href="#down"/></svg>More</button>
  <div class="more">
    <div class="tools"><button><svg><use href="#gridel"/></svg>Grid El...</button><button><svg><use href="#wallend"/></svg>Wall End</button><button><svg><use href="#cornerwin"/></svg>Corne...</button><button><svg><use href="#lamp"/></svg>Lamp</button><button><svg><use href="#radial"/></svg><sup>1.2</sup>Radial...</button></div>
    <div class="mini"><svg><use href="#up"/></svg><i class="thumb"></i><svg><use href="#down"/></svg></div>
  </div>
</aside>

<div class="work">
  <div class="infobox">
    <div class="handle"><button aria-label="Close info box"><svg><use href="#close"/></svg></button><i></i></div>
    <div class="infotools">
      <button class="t" aria-label="Selection method"><svg><use href="#method"/></svg></button><svg class="tick"><use href="#right"/></svg><button class="t" aria-label="Geometry"><svg><use href="#rect"/></svg></button><svg class="tick"><use href="#right"/></svg><button class="quick" aria-label="Quick selection"><svg><use href="#magic"/></svg></button><button class="arrowbox" aria-label="Arrow settings"><svg><use href="#arrow"/></svg></button>
    </div>
  </div>
  <div class="panes">
    <div class="view3">
      <div class="canvas"></div>
      <div class="vscroll"><svg><use href="#up"/></svg><i class="before"></i><i class="thumb"><svg><use href="#grip3"/></svg></i><i class="after"></i><svg><use href="#down"/></svg></div>
      <div class="status">
        <button class="t on" aria-label="Quick options"><svg><use href="#quick"/></svg></button><button class="t" aria-label="Zoom selection"><svg><use href="#zoomsel"/></svg></button><button class="t" aria-label="Plot"><svg><use href="#plot"/></svg></button>
        <button class="val scale">1:100</button><button class="val zoom">50 %</button><button class="val go" aria-label="Zoom menu"><svg><use href="#right"/></svg></button>
        <div class="zooms"><button class="t" aria-label="Zoom"><svg><use href="#zoompm"/></svg></button><button class="t" aria-label="Zoom in"><svg><use href="#zin"/></svg></button><button class="t" aria-label="Zoom out"><svg><use href="#zout"/></svg></button><button class="t" aria-label="Pan"><svg><use href="#hand"/></svg></button><button class="t" aria-label="Fit in window"><svg><use href="#fit"/></svg></button><button class="t" aria-label="Orientation"><svg><use href="#orient"/></svg></button></div>
        <button class="val zoom">0.00°</button><button class="t" aria-label="Previous zoom"><svg><use href="#zprev"/></svg></button><button class="t" aria-label="Next zoom"><svg><use href="#znext"/></svg></button>
        <div class="hscroll"><svg><use href="#left"/></svg><i class="before"></i><i class="thumb"><svg><use href="#grip3"/></svg></i><i class="after"></i><svg><use href="#right"/></svg></div>
      </div>
      <div class="sizegrip"></div>
    </div>

    <aside class="navigator">
      <div class="title"><h2>Navigator - Project ...</h2><button aria-label="Close navigator"><svg><use href="#close"/></svg></button></div>
      <div class="navtabs"><button class="chooser" aria-label="Project chooser"><svg><use href="#export"/></svg><svg class="tick"><use href="#right"/></svg></button><button class="on" aria-label="Project map"><svg><use href="#home"/></svg></button><button aria-label="View map"><svg><use href="#views"/></svg></button><button aria-label="Layout book"><svg><use href="#layout"/></svg></button><button aria-label="Publisher"><svg><use href="#publish"/></svg></button></div>
      <div class="treebox">
      <ul class="tree">
        <li><i class="c first"><b class="x minus"></b></i><svg><use href="#home"/></svg>Untitled</li>
        <li><i class="c v"></i><i class="c top"><b class="x minus"></b></i><svg><use href="#fplan"/></svg>Stories</li>
        <li class="sel"><i class="c v"></i><i class="c v"></i><i class="c last"></i><svg><use href="#story"/></svg><strong>0. Story</strong></li>
        <li><i class="c v"></i><i class="c v h"></i><svg><use href="#fsection"/></svg>Sections</li>
        <li><i class="c v"></i><i class="c v h"></i><svg><use href="#fsection"/></svg>Elevations</li>
        <li><i class="c v"></i><i class="c v h"></i><svg><use href="#finterior"/></svg>Interior Elevations</li>
        <li><i class="c v"></i><i class="c v h"></i><svg><use href="#fwork"/></svg>Worksheets</li>
        <li><i class="c v"></i><i class="c v h"></i><svg><use href="#fdetail"/></svg>Details</li>
        <li><i class="c v"></i><i class="c v h"></i><svg><use href="#f3ddoc"/></svg>3D Documents</li>
        <li><i class="c v"></i><i class="c v h"><b class="x"></b></i><svg><use href="#f3d"/></svg>3D</li>
        <li><i class="c v"></i><i class="c v h"><b class="x"></b></i><svg><use href="#fsched"/></svg>Schedules</li>
        <li><i class="c v"></i><i class="c v h"><b class="x"></b></i><svg><use href="#findex"/></svg>Project Indexes</li>
        <li><i class="c v"></i><i class="c v h"><b class="x"></b></i><svg><use href="#flist"/></svg>Lists</li>
        <li><i class="c v"></i><i class="c last"><b class="x"></b></i><svg><use href="#flist"/></svg>Info</li>
        <li><i class="c last"><b class="x"></b></i><svg><use href="#flist"/></svg>Help</li>
      </ul>
      </div>
      <div class="navactions"><button aria-label="New item"><svg><use href="#newview"/></svg></button><button aria-label="Delete item"><svg><use href="#xred"/></svg></button></div>
      <button class="props"><svg><use href="#down"/></svg>Properties</button>
      <div class="fields"><svg><use href="#story"/></svg><input class="num" aria-label="Story number" value="0." readonly><input class="name" aria-label="Story name" value="Story"></div>
      <button class="settings">Settings...</button>
    </aside>
  </div>
</div>
</main>

<footer class="coords">
  <i class="grip"></i>
  <button class="press origin" aria-label="User origin"><svg><use href="#origin"/></svg></button><button class="press next" aria-label="Origin options"><svg><use href="#right"/></svg></button>
  <button class="t seg" aria-label="Editing plane line"><svg><use href="#seg"/></svg></button>
  <i class="sep"></i>
  <div class="methods"><button aria-label="Perpendicular"><svg><use href="#check"/></svg><svg class="tick"><use href="#right"/></svg></button><button aria-label="Offset"><svg><use href="#plusdim"/></svg><svg class="tick"><use href="#right"/></svg></button><button aria-label="Multiply"><svg><use href="#boxes"/></svg><svg class="tick"><use href="#right"/></svg></button><button aria-label="Magic wand"><svg><use href="#gear"/></svg></button></div>
  <i class="sep"></i>
  <button class="t halficon" aria-label="Snap points"><svg><use href="#half"/></svg></button>
  <div class="halftext"><b>Half</b><span>2</span></div>
  <button class="pop" aria-label="Snap point options"><svg><use href="#right"/></svg></button>
  <i class="sep"></i>
  <button class="cmd ok" disabled>OK</button><button class="cmd" disabled>Cancel</button>
  <i class="grip mid"></i>
  <div class="snaps"><button class="t" aria-label="Cursor"><svg><use href="#xbold"/></svg></button><button class="t" aria-label="Skewed grid"><svg><use href="#skew"/></svg></button><button class="t" aria-label="Grid snap"><svg><use href="#gridsnap"/></svg></button><button class="plus" aria-label="Plus"><svg><use href="#plus"/></svg><svg class="tick"><use href="#right"/></svg></button></div>
  <i class="sep"></i>
  <button class="press delta" aria-label="Relative XY"><svg><use href="#delta"/></svg></button>
  <dl><dt>Δx:</dt><dd>-57.81</dd><dt>Δy:</dt><dd>4.74</dd></dl>
  <i class="sep"></i>
  <button class="press delta" aria-label="Relative polar"><svg><use href="#delta"/></svg></button>
  <dl class="polar"><dt>Δr:</dt><dd>58.00</dd><dt>a:</dt><dd>175.31°</dd></dl>
  <i class="sep"></i>
  <button class="grav" aria-label="Gravity"><svg><use href="#gravity"/></svg><svg class="tick"><use href="#right"/></svg></button>
  <div class="elev"><p>Δz: 0.00</p><p>to Project Zero</p></div>
  <button class="pop low" aria-label="Elevation reference"><svg><use href="#right"/></svg></button>
</footer>
<div class="strip"></div>
</div>
</body>
</html>
```
FILE: styles.css
```css
* { box-sizing: border-box; margin: 0; padding: 0; }
body { font: 8px/12px "DejaVu Sans Condensed", "DejaVu Sans", sans-serif; color: #222; background: #000; }
button { font: inherit; color: inherit; background: none; border: 0; display: flex; align-items: center; justify-content: center; white-space: nowrap; }
svg { display: block; flex: none; }
i, b.x { display: block; flex: none; font-style: normal; }
ul { list-style: none; }
.sprite { position: absolute; width: 0; height: 0; }

.app { height: 100vh; display: flex; flex-direction: column; background: #f0f0f0; border-top: 2px solid #504b48; border-right: 3px solid #000; overflow: hidden; }

/* menu bar */
.menubar { flex: none; height: 15px; display: flex; align-items: center; background: linear-gradient(#fff 0, #e9edf7 30%, #d7dff0 55%, #d9e1f2 75%, #c9cfdc 85%); border-bottom: 1px solid #a9abb0; }
.menubar .doc { width: 12px; height: 9px; margin-left: 4px; }
.menubar nav { display: flex; flex: 1; gap: 9px; margin-left: 5px; font-family: Roboto, sans-serif; font-size: 9px; color: #55585f; }
.winbtns { display: flex; gap: 2px; margin-right: 2px; }
.winbtns svg { width: 8px; height: 8px; }

/* toolbars */
.toolbars { position: relative; flex: none; border-bottom: 1px solid #b8b8b8; }
.bar { height: 23px; display: flex; align-items: center; }
.g { display: flex; align-items: center; gap: 1px; }
.t { width: 16px; height: 20px; flex: none; }
.t svg { width: 14px; height: 14px; }
.d { width: 8px; height: 16px; }
.d svg, .m svg { width: 7px; height: 7px; }
.grip { width: 3px; height: 18px; margin: 0 3px 0 2px; border-left: 2px dotted #c3c3c3; }
.sep { width: 1px; height: 18px; margin: 0 3px 0 2px; background: #aaa; }
.split { display: flex; width: 31px; height: 21px; border: 1px solid #777; border-radius: 3px; background: #e6e6e6; }
.split button { flex: 1; }
.split .m { flex: none; width: 10px; border-left: 1px solid #777; }
.split svg { width: 14px; height: 14px; }
.split .m svg { width: 7px; height: 7px; }
.on { border: 1px solid #777; border-radius: 3px; background: #dcdcdc; }
.view { width: 112px; margin: 0 1px 0 3px; justify-content: space-between; }
.second { padding-left: 63px; }
.second .grip { margin-right: 0; }
.split.wide { width: 35px; }
.modes { width: 54px; margin: 0 1px; justify-content: space-between; }
.walkers { gap: 4px; }
.extras { width: 331px; margin-left: 94px; justify-content: space-between; }
.highlight { position: absolute; left: 292px; top: 21px; width: 368px; height: 47px; border: 3px solid #f08031; z-index: 2; pointer-events: none; }

/* panel titles */
.title { flex: none; display: flex; align-items: center; justify-content: space-between; height: 11px; padding: 0 1px 0 2px; background: #bfd1df; }
.title h2 { font: bold 9px/11px "Liberation Sans", sans-serif; color: #34475b; white-space: nowrap; }
.title svg, .handle svg { width: 8px; height: 8px; }

.body { flex: 1; min-height: 0; display: flex; }

/* toolbox */
.toolbox { width: 66px; flex: none; display: flex; flex-direction: column; margin-right: 3px; border-left: 1px solid #bbb; }
.head { flex: none; height: 11px; display: flex; align-items: center; justify-content: flex-start; gap: 3px; padding-left: 5px; background: #fafafa; border-bottom: 1px solid #ddd; }
.head svg { width: 8px; height: 8px; }
.head.plain { height: 13px; padding-left: 16px; border: 0; }
.tools { display: grid; grid-auto-rows: 1fr; }
.tools button { position: relative; justify-content: flex-start; gap: 5px; padding-left: 2px; min-height: 0; }
.tools svg { width: 18px; height: 14px; }
.tools sup { position: absolute; left: 14px; top: 2px; font: bold 6px/6px "Liberation Sans", sans-serif; }
.tools.select { height: 35px; }
.tools .active { border: 1px solid #777; border-radius: 3px; background: #f2f2f4; padding-left: 1px; margin: 0 0 2px; }
.design { flex: 13; min-height: 0; padding: 1px 0 2px; }
.more { flex: 5; min-height: 0; display: flex; }
.more .tools { flex: 1; }
.mini { width: 8px; display: flex; flex-direction: column; align-items: center; justify-content: space-between; padding: 3px 0; }
.mini svg { width: 6px; height: 6px; }
.mini .thumb { width: 6px; height: 31px; margin-bottom: 34px; border: 1px solid #aaa; background: #f4f4f4; }

/* info box */
.work { flex: 1; min-width: 0; display: flex; flex-direction: column; }
.infobox { flex: none; height: 40px; display: flex; align-items: flex-start; }
.handle { width: 10px; height: 36px; display: flex; flex-direction: column; justify-content: space-between; align-items: center; padding: 2px 0 1px; background: #bfd1df; }
.handle i { width: 6px; height: 10px; border: 1px dotted #567; border-width: 0 1px 2px 0; }
.infotools { display: flex; align-items: center; height: 29px; width: 120px; padding: 9px 3px 0 5px; border: 1px solid #c4c4c4; border-width: 0 1px 1px 0; background: #f4f4f4; }
.infotools .t { width: 18px; }
.infotools .tick { width: 7px; height: 7px; margin: 7px 4px 0 0; }
.infotools .quick { width: 29px; height: 13px; border: 1px solid #777; border-radius: 3px; background: #d8d8d8; }
.infotools .quick svg { width: 12px; height: 11px; }
.infotools .arrowbox { width: 20px; height: 17px; margin: -4px 0 0 6px; border: 1px solid #bbb; border-width: 1px 0 0 1px; }
.infotools .arrowbox svg { width: 12px; height: 13px; }

/* drawing area */
.panes { flex: 1; min-height: 0; display: flex; }
.view3 { flex: 1; min-width: 0; display: grid; grid-template: 1fr 12px / 1fr 12px; margin-right: 3px; border-top: 1px solid #777; border-left: 1px solid #777; }
.canvas { background: #000; }
.vscroll, .hscroll { display: flex; align-items: center; background: #f3f3f5; }
.vscroll { flex-direction: column; padding: 2px 0; }
.vscroll > svg, .hscroll > svg { width: 7px; height: 7px; }
.thumb { display: flex; align-items: center; justify-content: center; border: 1px solid #a2a2a6; border-radius: 1px; background: linear-gradient(90deg, #f6f6f8, #d4d4da); }
.thumb svg { width: 8px; height: 8px; }
.vscroll .before { flex: 74; }
.vscroll .thumb { flex: 174; width: 10px; }
.vscroll .thumb svg { transform: rotate(90deg); }
.vscroll .after { flex: 87; }
.status { display: flex; align-items: center; background: #f3f3f3; }
.status .t { height: 12px; width: 17px; }
.status .t svg { height: 12px; }
.val { height: 10px; border: 1px solid #888; border-radius: 2px; background: linear-gradient(#f6f6f6, #d8d8d8); margin-left: 2px; font: 8px/8px "Liberation Sans", sans-serif; }
.scale { width: 45px; }
.zoom { width: 53px; }
.go { width: 16px; }
.go svg { width: 7px; height: 7px; }
.zooms { display: flex; width: 105px; justify-content: space-between; }
.hscroll { flex: 1; height: 12px; margin-left: 2px; }
.hscroll .before { flex: 91; }
.hscroll .thumb { flex: 221; height: 10px; background: linear-gradient(#f6f6f8, #d4d4da); }
.hscroll .after { flex: 92; }
.sizegrip { background: radial-gradient(circle, #bbb 1px, transparent 1px) 2px 2px / 3px 3px; clip-path: polygon(100% 0, 100% 100%, 0 100%); }

/* navigator */
.navigator { width: 119px; flex: none; display: flex; flex-direction: column; border-left: 1px solid #aaa; padding-right: 1px; }
.navigator .title { background: linear-gradient(#8f9ba5, #b3c4d2 30%); height: 12px; padding-left: 1px; }
.navtabs { display: flex; align-items: center; height: 21px; padding-left: 1px; }
.navtabs button { width: 23px; height: 17px; }
.navtabs svg { width: 13px; height: 13px; }
.navtabs .on { margin-left: 4px; }
.navtabs .chooser { width: 22px; border: 1px solid #999; border-radius: 2px; }
.navtabs .tick { width: 6px; height: 6px; margin-top: 6px; }
.treebox { flex: 1; min-height: 0; background: #fff; border: 1px solid #999; border-left: 0; }
.tree { display: grid; grid-auto-rows: 1fr; height: 175px; padding-left: 2px; }
.tree li { display: flex; align-items: center; min-height: 0; white-space: nowrap; }
.tree svg { width: 12px; height: 11px; margin-right: 1px; margin-left: 2px; }
.c { position: relative; width: 14px; height: 100%; background: linear-gradient(#ccc, #ccc) 7px 50% / 7px 1px no-repeat; }
.c.v { background: linear-gradient(#ccc, #ccc) 7px 0 / 1px 100% no-repeat; }
.c.v.h { background: linear-gradient(#ccc, #ccc) 7px 0 / 1px 100% no-repeat, linear-gradient(#ccc, #ccc) 7px 50% / 7px 1px no-repeat; }
.c.last { background: linear-gradient(#ccc, #ccc) 7px 0 / 1px 50% no-repeat, linear-gradient(#ccc, #ccc) 7px 50% / 7px 1px no-repeat; }
.c.top { background: linear-gradient(#ccc, #ccc) 7px 0 / 1px 100% no-repeat, linear-gradient(#ccc, #ccc) 7px 50% / 7px 1px no-repeat; }
.x { position: absolute; left: 4px; top: 3px; width: 7px; height: 7px; border: 1px solid #aaa; background: linear-gradient(#555, #555) 1px 2px / 3px 1px no-repeat, linear-gradient(#555, #555) 2px 1px / 1px 3px no-repeat, #fff; }
.x.minus { background: linear-gradient(#555, #555) 1px 2px / 3px 1px no-repeat, #fff; }
.tree strong { font: bold 9px/10px "Liberation Sans", sans-serif; outline: 1px solid #9fc0cf; }
.navactions { display: flex; justify-content: flex-end; gap: 2px; padding: 5px 0 4px; }
.navactions button { width: 15px; height: 16px; border: 1px solid #888; border-radius: 2px; background: #f4f4f4; }
.navactions svg { width: 12px; height: 12px; }
.props { height: 13px; justify-content: flex-start; gap: 6px; padding-left: 9px; background: #fafafa; font-family: "Liberation Sans", sans-serif; }
.props svg { width: 8px; height: 8px; }
.fields { display: flex; align-items: center; margin: 3px 0; }
.fields svg { width: 8px; height: 9px; }
.fields input { height: 13px; border: 0; font: 8px/12px "Liberation Sans", sans-serif; color: #222; min-width: 0; }
.fields .num { width: 24px; margin: 0 2px; background: #efefef; border: 1px solid #ddd; }
.fields .name { flex: 1; padding-left: 3px; background: #fff; }
.settings { height: 16px; margin: 0 10px 3px 11px; border: 1px solid #888; background: linear-gradient(#f6f6f6, #e2e2e2); font-family: "Liberation Sans", sans-serif; }

/* coordinate bar */
.coords { flex: none; height: 25px; display: flex; align-items: center; padding-left: 38px; border-top: 1px solid #e2e2e2; border-bottom: 1px solid #b4b4b4; font: bold 8px/10px "Liberation Sans", sans-serif; background: #f3f3f3; }
.coords .sep { height: 21px; margin: 0 4px; }
.coords .tick { width: 6px; height: 6px; margin-top: 11px; }
.press { border: 1px solid #777; border-radius: 2px; background: #dcdcdc; height: 17px; }
.press svg { width: 15px; height: 13px; }
.origin { width: 21px; margin-left: 1px; }
.next { width: 8px; margin-left: 1px; background: #f0f0f0; }
.next svg { width: 6px; height: 6px; }
.seg { width: 22px; }
.methods { display: flex; width: 91px; justify-content: space-between; }
.methods button { width: 23px; }
.methods svg, .plus svg, .grav svg { width: 14px; height: 14px; }
.halficon { width: 20px; margin-left: 1px; }
.halftext { display: flex; flex-direction: column; width: 49px; padding-left: 1px; }
.halftext span { font-weight: normal; color: #777; }
.pop { width: 9px; height: 9px; margin-bottom: 9px; border: 1px solid #555; border-radius: 2px; }
.pop svg { width: 6px; height: 6px; }
.pop.low { margin: 9px 0 0; }
.cmd { width: 39px; height: 15px; border: 1px solid #bbb; border-radius: 2px; color: #999; font: 8px/12px "DejaVu Sans Condensed", sans-serif; }
.cmd.ok { margin-right: 5px; }
.grip.mid { margin: 0 0 0 28px; }
.snaps { display: flex; width: 90px; margin-left: 4px; margin-right: -2px; justify-content: space-between; }
.delta { width: 10px; }
.delta svg { width: 10px; height: 14px; }
.coords dl { display: grid; grid-template-columns: 12px 1fr; column-gap: 4px; width: 85px; margin-left: 4px; padding-left: 1px; background: #fff; color: #333; }
.coords dl.polar { grid-template-columns: 12px 1fr; width: 86px; }
.coords dt { text-align: right; }
.grav { width: 22px; }
.elev { width: 72px; margin-left: 4px; color: #333; }
.elev p:first-child { background: #fff; width: 80px; }
.strip { flex: none; height: 7px; background: #f1efed; }
```
